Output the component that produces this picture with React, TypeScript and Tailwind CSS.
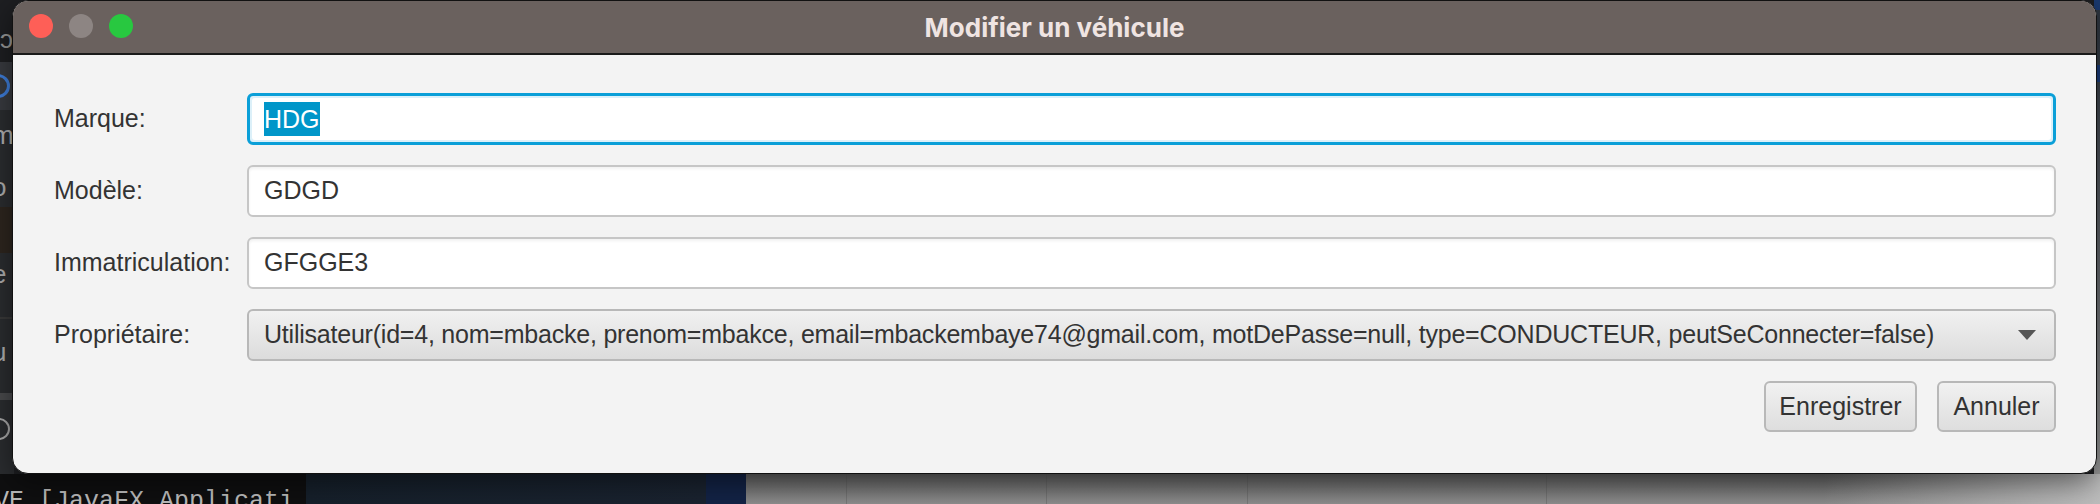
import React from "react";

const sans = { fontFamily: '"Liberation Sans", Arial, sans-serif' };

function Field({ value, focused }: { value: string; focused?: boolean }) {
  if (focused) {
    return (
      <div className="h-[52px] rounded-[6px] border-[3px] border-[#0a9fd8] bg-[#dcf0f9] p-[2px]">
        <div className="flex h-full items-center rounded-[3px] bg-white pl-[12px]">
          <span className="bg-[#0096c9] px-0 text-[25px] leading-[34px] text-white">{value}</span>
        </div>
      </div>
    );
  }
  return (
    <div className="flex h-[52px] items-center rounded-[6px] border-[2px] border-[#c6c6c6] bg-white pl-[15px] shadow-[inset_0_2px_3px_rgba(0,0,0,0.06)]">
      <span className="text-[25px] text-[#333]">{value}</span>
    </div>
  );
}

function Btn({ label, w }: { label: string; w: string }) {
  return (
    <div
      className={`flex h-[51px] ${w} items-center justify-center rounded-[6px] border-[2px] border-[#b8b8b8] bg-gradient-to-b from-[#f1f1f1] to-[#dedede] text-[25px] text-[#333]`}
    >
      {label}
    </div>
  );
}

export default function App() {
  return (
    <div className="relative h-[504px] w-[2100px] overflow-hidden bg-[#1e1f22]" style={sans}>
      {/* desktop background: left IDE strip */}
      <div className="absolute left-0 top-0 flex h-[474px] w-[14px] flex-col bg-[#2b2d30] text-[26px] leading-none text-[#a0a0a0]">
        <div className="h-[62px] bg-[#1e1f22] pt-[26px] pl-[0px] text-[#999]">ɔ</div>
        <div className="flex h-[48px] items-center bg-[#393b40]">
          <div className="ml-[-14px] h-[24px] w-[24px] rounded-full border-[3px] border-[#3f7fdc]"></div>
        </div>
        <div className="h-[97px] pt-[12px] text-[#b0b0b0]">
          <div className="ml-[-8px]">m</div>
          <div className="ml-[-8px] mt-[26px]">o</div>
        </div>
        <div className="h-[46px] bg-[#2e261f]"></div>
        <div className="h-[140px] pt-[8px] text-[#b0b0b0]">
          <div className="ml-[-8px]">e</div>
          <div className="mt-[30px] h-[2px] bg-[#3a3a3a]"></div>
          <div className="ml-[-8px] mt-[20px]">u</div>
        </div>
        <div className="h-[7px] bg-[#4a4b4d]"></div>
        <div className="flex-1 pt-[18px]">
          <div className="ml-[-12px] h-[22px] w-[22px] rounded-full border-[2px] border-[#aaa]"></div>
        </div>
      </div>

      {/* right strip */}
      <div className="absolute right-0 top-0 flex h-[474px] w-[6px] flex-col bg-gradient-to-b from-[#2d3540] to-[#9a9a9a]">
        <div className="h-[10px] bg-[#1b3b72]"></div>
        <div className="h-[55px]"></div>
        <div className="h-[17px] bg-[#1d3f7f]"></div>
      </div>

      {/* bottom strip */}
      <div className="absolute bottom-0 left-0 flex h-[30px] w-[2100px]">
        <div className="relative w-[306px] overflow-hidden bg-[#0f0f10]">
          <div
            className="absolute left-[-6px] top-[15px] whitespace-pre text-[25px] leading-[25px] text-[#bdbdbd]"
            style={{ fontFamily: '"Liberation Mono", "DejaVu Sans Mono", monospace' }}
          >
            VE [JavaFX Applicati
          </div>
        </div>
        <div className="w-[400px] bg-gradient-to-r from-[#16202b] to-[#1a2330]"></div>
        <div className="w-[40px] bg-[#132346]"></div>
        <div className="flex flex-1 bg-gradient-to-b from-[#626262] to-[#8e8e8e]">
          <div className="w-[101px] border-r border-[#5a5a5a]/40"></div>
          <div className="w-[200px] border-r border-[#5a5a5a]/40"></div>
          <div className="w-[201px] border-r border-[#5a5a5a]/40"></div>
          <div className="w-[299px] border-r border-[#5a5a5a]/40"></div>
          <div className="flex-1 bg-gradient-to-r from-transparent via-transparent to-[#bdbdbd]"></div>
        </div>
      </div>

      {/* window */}
      <div className="absolute left-[12px] top-0 flex h-[474px] w-[2085px] flex-col overflow-hidden rounded-[16px] border border-[#111] bg-[#f3f3f3] shadow-[0_8px_30px_rgba(0,0,0,0.5)]">
        {/* title bar */}
        <div className="relative flex h-[54px] shrink-0 items-center justify-center border-b-[2px] border-[#1a1a1a] bg-[#6a615e]">
          <div className="absolute left-[16px] top-[13px] flex gap-[16px]">
            <div className="h-[24px] w-[24px] rounded-full bg-[#fe5f57]"></div>
            <div className="h-[24px] w-[24px] rounded-full bg-[#8d8583]"></div>
            <div className="h-[24px] w-[24px] rounded-full bg-[#28c840]"></div>
          </div>
          <div
            className="text-[26px] font-bold text-[#efe4e2]"
            style={{ fontFamily: 'Inter, "Liberation Sans", sans-serif' }}
          >
            Modifier un véhicule
          </div>
        </div>

        {/* body */}
        <div className="flex flex-1 flex-col gap-[20px] pl-[41px] pr-[40px] pt-[38px]">
          <div className="grid grid-cols-[193px_1fr] items-center">
            <div className="text-[25px] text-[#333]">Marque:</div>
            <Field value="HDG" focused />
          </div>
          <div className="grid grid-cols-[193px_1fr] items-center">
            <div className="text-[25px] text-[#333]">Modèle:</div>
            <Field value="GDGD" />
          </div>
          <div className="grid grid-cols-[193px_1fr] items-center">
            <div className="text-[25px] text-[#333]">Immatriculation:</div>
            <Field value="GFGGE3" />
          </div>
          <div className="grid grid-cols-[193px_1fr] items-center">
            <div className="text-[25px] text-[#333]">Propriétaire:</div>
            <div className="flex h-[52px] items-center justify-between rounded-[6px] border-[2px] border-[#b8b8b8] bg-gradient-to-b from-[#f1f1f1] to-[#dcdcdc] pl-[15px] pr-[18px]">
              <span className="whitespace-nowrap text-[25px] tracking-[-0.22px] text-[#333]">
                Utilisateur(id=4, nom=mbacke, prenom=mbakce, email=mbackembaye74@gmail.com, motDePasse=null, type=CONDUCTEUR, peutSeConnecter=false)
              </span>
              <svg width="18" height="10" viewBox="0 0 18 10">
                <polygon points="0,0 18,0 9,10" fill="#555" />
              </svg>
            </div>
          </div>
          <div className="flex justify-end gap-[20px]">
            <Btn label="Enregistrer" w="w-[153px]" />
            <Btn label="Annuler" w="w-[119px]" />
          </div>
        </div>
      </div>
    </div>
  );
}
